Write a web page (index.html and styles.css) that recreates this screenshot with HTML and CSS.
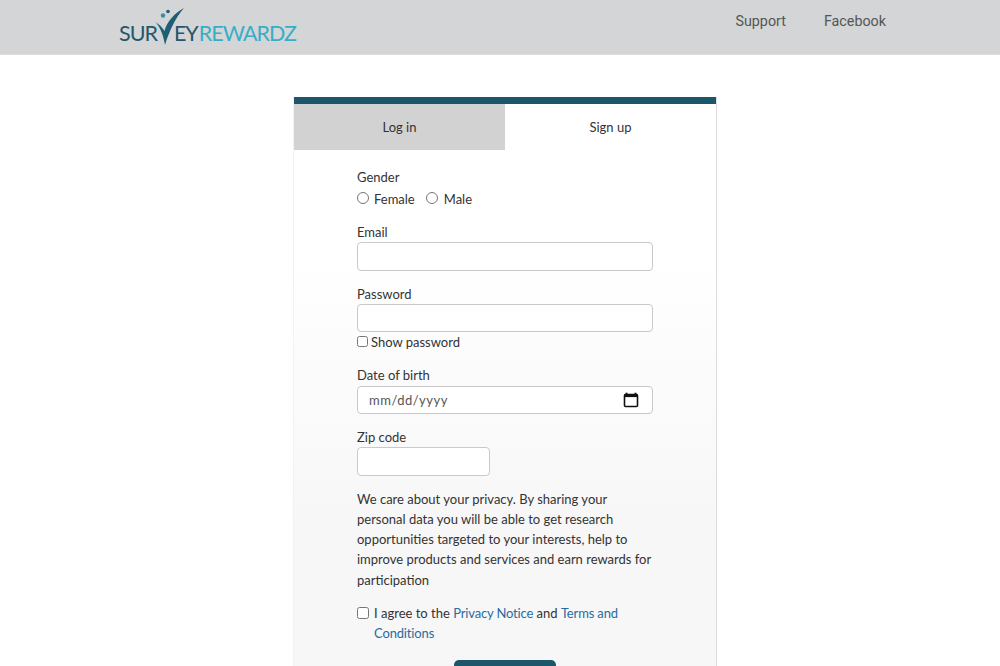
FILE: index.html
```html
<!DOCTYPE html>
<html>
	<head>
		<title>Survey Rewardz - Sign up</title>
		<link rel="stylesheet" href="styles.css">
	</head>
	<body>
		<header class="topbar">
			<a class="logo" href="#">
				<span class="logo-dark">SUR</span><span class="logo-v">V<svg class="logo-mark" viewBox="0 0 30 40" width="30" height="40">
					<path d="M0 14 C4 17 8 25 10 37 C14 24 20 10 29 0 C20 5 12 13 9.5 23 C7 19 4 16 0 14 Z" fill="#1f5f75"/>
					<circle cx="8" cy="7.5" r="2.2" fill="#3a8ea3"/>
					<circle cx="13" cy="3.5" r="1.8" fill="#1f5f75"/>
				</svg></span><span class="logo-dark">EY</span><span class="logo-light">REWARDZ</span>
			</a>
			<nav class="topnav">
				<a href="#">Support</a>
				<a href="#">Facebook</a>
			</nav>
		</header>

		<main class="card">
			<div class="tabs">
				<a class="tab" href="#">Log in</a>
				<a class="tab tab-active" href="#">Sign up</a>
			</div>
			<form class="signup-form">
				<div class="field field-gender">
					<label class="field-label">Gender</label>
					<div class="radio-row">
						<input type="radio" name="gender" id="female" class="radio">
						<label for="female">Female</label>
						<input type="radio" name="gender" id="male" class="radio">
						<label for="male">Male</label>
					</div>
				</div>
				<div class="field">
					<label class="field-label">Email</label>
					<input type="text" class="text-input">
				</div>
				<div class="field">
					<label class="field-label">Password</label>
					<input type="password" class="text-input">
					<div class="show-row">
						<input type="checkbox" id="show" class="check-small">
						<label for="show">Show password</label>
					</div>
				</div>
				<div class="field">
					<label class="field-label">Date of birth</label>
					<div class="text-input date-input">
						<span class="date-hint">mm/dd/yyyy</span>
						<svg class="date-icon" viewBox="0 0 16 16" width="16" height="16">
							<path d="M3.5 0.8v2M12.5 0.8v2" stroke="#111" stroke-width="2" fill="none"/>
							<rect x="1.5" y="2.5" width="13" height="12" rx="1" stroke="#111" stroke-width="1.6" fill="none"/>
							<rect x="1.5" y="2.5" width="13" height="2.6" fill="#111"/>
						</svg>
					</div>
				</div>
				<div class="field">
					<label class="field-label">Zip code</label>
					<input type="text" class="text-input zip-input">
				</div>
				<p class="privacy">We care about your privacy. By sharing your personal data you will be able to get research opportunities targeted to your interests, help to improve products and services and earn rewards for participation</p>
				<div class="agree-row">
					<input type="checkbox" id="agree" class="check">
					<label for="agree">I agree to the <a href="#">Privacy Notice</a> and <a href="#">Terms and Conditions</a></label>
				</div>
				<button type="submit" class="submit-btn">Sign up</button>
			</form>
		</main>
	</body>
</html>
```
FILE: styles.css
```css
html {
	height: 100%;
	overflow: hidden;
}

body {
	font-family: Lato, Arial, sans-serif;
	font-size: 13px;
	color: #333;
	background: #fff;
	margin: 0;
	padding: 0;
}

a {
	text-decoration: none;
}

.topbar {
	height: 55px;
	box-sizing: border-box;
	background-color: #d3d5d6;
	border-bottom: 1px solid #dcdcdc;
	display: flex;
	justify-content: space-between;
	padding: 0 114px 0 119px;
}

.logo {
	display: flex;
	align-items: baseline;
	padding-top: 21px;
	font-size: 21.5px;
	line-height: 24px;
	letter-spacing: -1px;
}

.logo-dark {
	color: #24576b;
}

.logo-light {
	color: #38aec6;
	margin-left: 1px;
}

.logo-v {
	position: relative;
	color: transparent;
	width: 17px;
}

.logo-mark {
	position: absolute;
	left: -2px;
	top: -13px;
}

.topnav {
	display: flex;
	gap: 38px;
	padding-top: 12px;
}

.topnav a {
	font-family: Roboto, sans-serif;
	font-size: 14.3px;
	line-height: 18px;
	color: #555;
}

.card {
	width: 422px;
	margin: 42px 0 0 294px;
	border-top: 7px solid #1c566b;
	box-shadow: 1px 0 0 #dcdcdc, -1px 0 0 #f2f2f2;
	background: linear-gradient(#fff, #fff 150px, #f7f7f7 420px);
}

.tabs {
	display: flex;
	height: 46px;
}

.tab {
	flex: 1;
	text-align: center;
	line-height: 46px;
	color: #333;
	background-color: #d2d2d2;
}

.tab-active {
	background-color: #fff;
}

.signup-form {
	padding: 17px 63px 40px 63px;
}

.field {
	margin-bottom: 13px;
}

.field-label {
	display: block;
	line-height: 19px;
	padding-top: 1px;
}

.field-gender {
	margin-bottom: 11px;
}

.radio-row {
	display: flex;
	align-items: center;
	height: 24px;
}

.radio {
	width: 12px;
	height: 12px;
	margin: -3px 5px 0 0;
}

.radio-row label {
	margin-right: 11px;
}

.radio-row label:last-child {
	margin-left: 1px;
}

.text-input {
	display: block;
	width: 100%;
	height: 28.5px;
	box-sizing: border-box;
	border: 1px solid #c9c9c9;
	border-radius: 4px;
	background-color: #fff;
	padding: 0 11px;
	margin: 0 0 0.5px;
}

.date-input {
	display: flex;
	justify-content: space-between;
	align-items: center;
	padding-right: 13px;
	margin-top: 1px;
}

.date-hint {
	color: #555;
	letter-spacing: 0.5px;
}

.zip-input {
	width: 133px;
}

.show-row {
	display: flex;
	align-items: center;
	height: 20px;
	margin: -1px 0 3px;
}

.check-small {
	width: 11px;
	height: 11px;
	margin: 0 3px 0 0;
}

.privacy {
	margin: 13px 0 13px;
	line-height: 20.3px;
}

.agree-row {
	display: flex;
	line-height: 20px;
}

.check {
	width: 12px;
	height: 12px;
	margin: 4px 5px 0 0;
	flex-shrink: 0;
}

.agree-row a {
	color: #2a6a9e;
	letter-spacing: -0.15px;
}

.submit-btn {
	display: block;
	width: 102px;
	height: 38px;
	margin: 17px auto 0;
	border: none;
	border-radius: 5px;
	background-color: #1c566b;
	color: #fff;
	font-size: 14px;
}
```
